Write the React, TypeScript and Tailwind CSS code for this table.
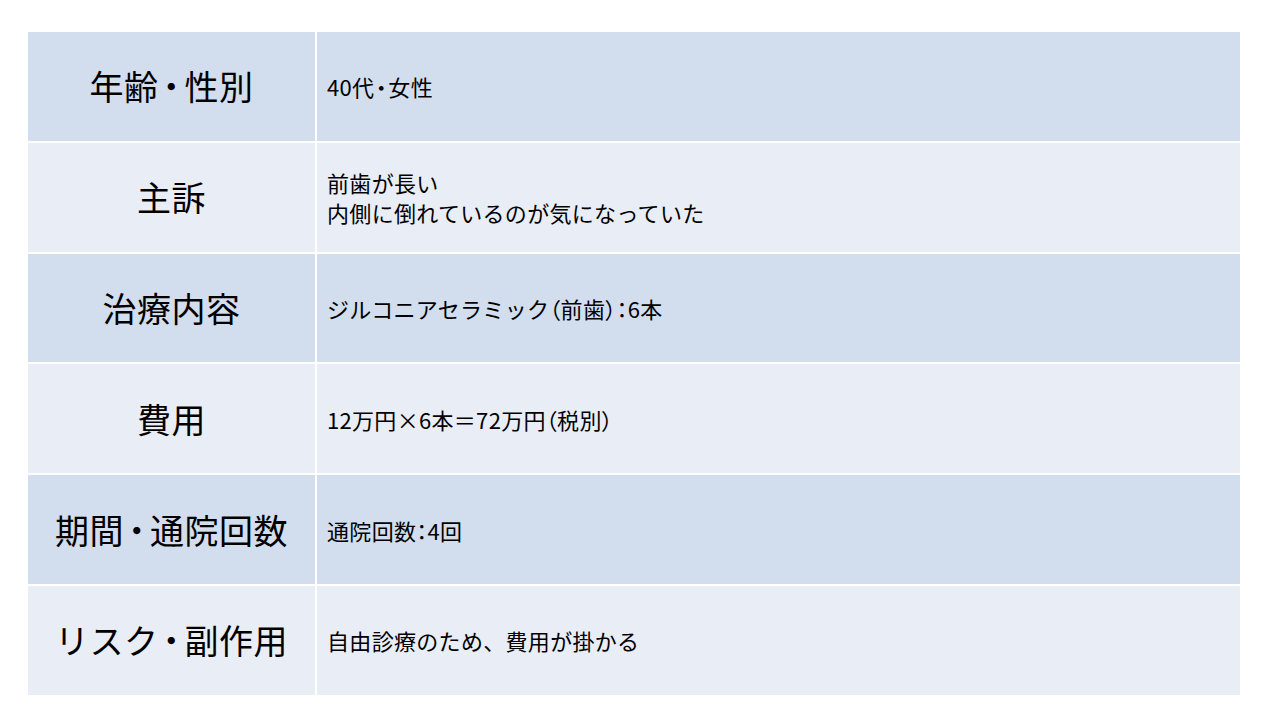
const rows: { label: string; lines: string[] }[] = [
  { label: '年齢・性別', lines: ['40代・女性'] },
  { label: '主訴', lines: ['前歯が長い', '内側に倒れているのが気になっていた'] },
  { label: '治療内容', lines: ['ジルコニアセラミック（前歯）：6本'] },
  { label: '費用', lines: ['12万円×6本＝72万円（税別）'] },
  { label: '期間・通院回数', lines: ['通院回数：4回'] },
  { label: 'リスク・副作用', lines: ['自由診療のため、費用が掛かる'] },
];

// narrow punctuation, as the slide font sets it
const Tight = ({ text, dotClass }: { text: string; dotClass: string }) => (
  <>
    {Array.from(text).map((ch, i) =>
      '・（）：'.includes(ch) ? (
        <span key={i} className={`[font-feature-settings:'palt'] ${ch === '・' ? dotClass : ''}`}>
          {ch}
        </span>
      ) : (
        ch
      ),
    )}
  </>
);

export default function App() {
  return (
    <div className="w-[1280px] h-[720px] bg-white pt-[32px] pl-[28px] font-['Noto_Sans_CJK_JP',sans-serif] text-black">
      <div className="w-[1212px] flex flex-col gap-[2px]">
        {rows.map((row, i) => {
          const bg = i % 2 === 0 ? 'bg-[#d2ddee]' : 'bg-[#e9edf6]';
          return (
            <div key={row.label} className="flex h-[108.8px] gap-[2px]">
              <div className={`w-[287px] flex items-center justify-center text-[34px] leading-none ${bg}`}>
                <span className="tracking-[0.5px]">
                  <Tight text={row.label} dotClass="inline-block w-[26px] text-center" />
                </span>
              </div>
              <div className={`flex-1 flex flex-col justify-center pl-[10px] text-[22px] leading-[30px] tracking-[0.3px] ${bg}`}>
                {row.lines.map(line => (
                  <span key={line}>
                    <Tight text={line} dotClass="inline-block w-[14px] text-center" />
                  </span>
                ))}
              </div>
            </div>
          );
        })}
      </div>
    </div>
  );
}
